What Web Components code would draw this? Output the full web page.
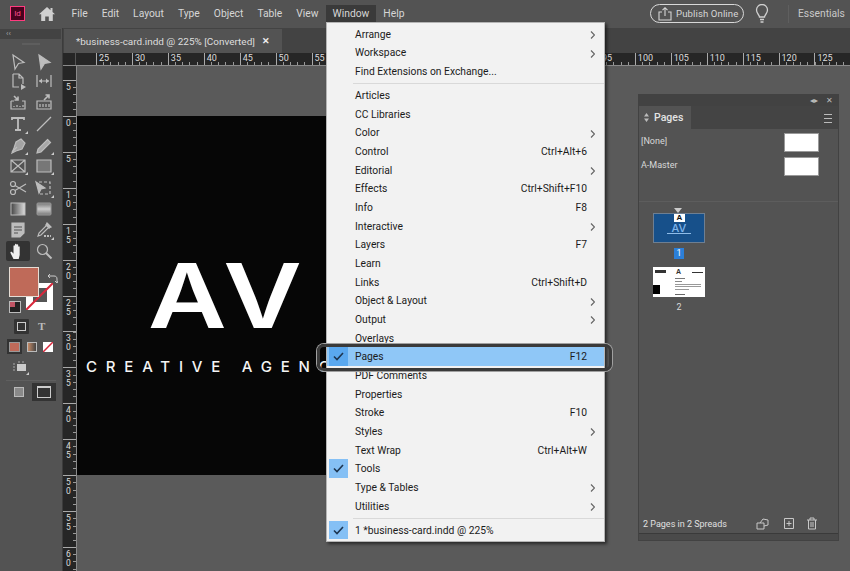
<!DOCTYPE html>
<html>
<head>
<meta charset="utf-8">
<title>InDesign</title>
<style>
  html, body { margin: 0; height: 100%; overflow: hidden; background: #535353; }
  body { font-family: Roboto, "Liberation Sans", sans-serif; }
</style>
</head>
<body>
<app-shell>
  <app-menubar slot="menubar"></app-menubar>
  <app-toolbox slot="tools"></app-toolbox>
  <doc-workspace slot="workspace"></doc-workspace>
  <window-menu slot="overlay"></window-menu>
  <pages-panel slot="overlay"></pages-panel>
</app-shell>

<script>
const stroke = (inner, size = 18) => `<svg width="${size}" height="${size}" viewBox="0 0 18 18" fill="none" stroke="currentColor" stroke-width="1.2">${inner}</svg>`;

const ICONS = {
    select: stroke('<path d="M4 2l11 7.5-5.5 1L6 16z"/>'),
    direct: stroke('<path d="M4 2l11 7.5-5.5 1L6 16z" fill="currentColor"/>'),
    page: stroke('<path d="M4 2h6l4 4v6M4 2v13h6M10 2v4h4"/><path d="M12 12l5 3-5 3z" fill="currentColor" stroke="none"/>'),
    gap: stroke('<path d="M2 3v12M16 3v12M4 9h10"/><path d="M4 9l3-2.5v5zM14 9l-3-2.5v5z" fill="currentColor" stroke="none"/>'),
    collect: stroke('<path d="M2 8v8h14V8h-3M2 8h3"/><path d="M5 3l4 4M9 3.5V7H5.500" stroke-width="1.6"/><path d="M5 13v1M8 12v2M11 13v1M14 12v2"/>'),
    place: stroke('<path d="M2 8v8h14V8H2z"/><path d="M9 7l5-5M10.500 2H14v3.500" stroke-width="1.6"/><path d="M5 11v3M8 11v3M11 11v3M14 11v3"/>'),
    type: stroke('<path d="M3 5V3h12v2M9 3v12M6 15h6" stroke-width="1.800"/>'),
    line: stroke('<path d="M2 16L16 2"/>'),
    pen: stroke('<path d="M12 2l4 4-3 6-6 2-4 2 2-5 2-6z" fill="currentColor" fill-opacity=".75"/><path d="M3 15l5-5"/>'),
    pencil: stroke('<path d="M12.500 2.500l3 3L6 15l-4 1 1-4z" fill="currentColor" fill-opacity=".8"/>'),
    frame: stroke('<path d="M2 3h14v12H2zM2 3l14 12M16 3L2 15"/>'),
    rect: stroke('<path d="M2 3h14v12H2z" fill="#777"/>'),
    scissors: stroke('<circle cx="4" cy="5" r="2.500"/><circle cx="4" cy="13" r="2.500"/><path d="M6 6.500L17 13M6 11.500L17 5"/>', 18),
    transform: stroke('<path d="M4 3h11v12H4" stroke-dasharray="3 2"/><path d="M1 3l9 6-4 1-2 4z" fill="currentColor"/>'),
    gradient: `<svg width="18" height="18" viewBox="0 0 18 18"><defs><linearGradient id="g1"><stop offset="0" stop-color="#444"/><stop offset="1" stop-color="#ddd"/></linearGradient></defs><rect x="2" y="3" width="14" height="12" fill="url(#g1)" stroke="#bbb"/></svg>`,
    feather: `<svg width="18" height="18" viewBox="0 0 18 18"><defs><linearGradient id="g2" x2="0" y2="1"><stop offset="0" stop-color="#777"/><stop offset=".5" stop-color="#ccc"/><stop offset="1" stop-color="#777"/></linearGradient></defs><rect x="2" y="3" width="14" height="12" rx="1" fill="url(#g2)" stroke="#999"/></svg>`,
    note: stroke('<path d="M3 2h12v10l-4 4H3z" fill="currentColor"/><path d="M5 6h8M5 9h8M5 12h4" stroke="#535353"/>'),
    dropper: stroke('<path d="M12 2l4 4-3 1-7 7-3 1 1-3 7-7z"/><path d="M11 3l4 4" stroke-width="2.500"/><path d="M9 15h7" stroke-width="2" stroke-dasharray="2 1"/>'),
    hand: `<svg width="18" height="18" viewBox="0 0 18 18"><path d="M4.500 17l-3-6c-.5-1 .8-1.800 1.500-1l1.500 1.800V4c0-1 1.500-1 1.500 0v4V2.500c0-1 1.600-1 1.600 0V8V3c0-1 1.600-1 1.600 0v5.500V5c0-1 1.500-1 1.500 0v8l-1 4z" fill="#eee"/></svg>`,
    zoom: stroke('<circle cx="7.500" cy="7.500" r="5"/><path d="M11 11l5.500 5.500" stroke-width="2"/>'),
    upload: `<svg width="16" height="16" viewBox="0 0 16 16" fill="none" stroke="currentColor" stroke-width="1.100"><path d="M5 6H2v8h12V6h-3M8 10V2M5.500 4.200L8 1.700l2.500 2.500"/></svg>`,
    bulb: `<svg width="16" height="20" viewBox="0 0 16 20" fill="none" stroke="currentColor" stroke-width="1.300"><path d="M5.500 13c0-2-3-3.500-3-7a5.500 5.500 0 0 1 11 0c0 3.500-3 5-3 7z"/><path d="M6 15.500h4M6.500 18h3" stroke-width="1.600"/></svg>`,
    home: `<svg width="16" height="14" viewBox="0 0 16 14"><path d="M8 0L0 7.200h2.200V14h4V9.500h3.600V14h4V7.200H16L13.500 5V1h-2v2.200z" fill="#cfcfcf"/></svg>`
};

class AppShell extends HTMLElement {
    constructor() {
        super();
        this.attachShadow({ mode: 'open' });
        this.shadowRoot.innerHTML = `
        <style>
          :host { display: grid; position: relative; width: 850px; height: 571px; overflow: hidden;
            grid-template-columns: 63px 1fr; grid-template-rows: 28px 1fr; background: #535353; }
          ::slotted([slot=menubar]) { grid-column: 1 / 3; }
        </style>
        <slot name="menubar"></slot>
        <slot name="tools"></slot>
        <slot name="workspace"></slot>
        <slot name="overlay"></slot>`;
    }
}

class AppMenubar extends HTMLElement {
    constructor() {
        super();
        this.attachShadow({ mode: 'open' });
        const items = ['File', 'Edit', 'Layout', 'Type', 'Object', 'Table', 'View', 'Window', 'Help'];
        this.shadowRoot.innerHTML = `
        <style>
          :host { display: flex; align-items: center; height: 28px; background: #535353; color: #d6d6d6;
            font: 10.3px Roboto, sans-serif; padding-bottom: 1px; box-sizing: border-box; white-space: nowrap; }
          .logo { width: 13px; height: 13px; margin-left: 10px; border: 1px solid #ff3b7f; background: #49021f;
            color: #ff4f8f; font: 8px/13px Roboto, sans-serif; text-align: center; }
          .home { margin: 0 9.500px 0 14px; display: flex; }
          .item { padding: 1px 7px; height: 15px; line-height: 15px; }
          .item.on { background: #3a3a3a; }
          .spacer { flex: 1; }
          .publish { display: flex; align-items: center; gap: 3px; width: 94px; height: 19px; box-sizing: border-box;
            border: 1px solid #d8d8d8; border-radius: 10px; padding-left: 6px; font-size: 9.6px; letter-spacing: .1px; }
          .bulb { margin: 0 18px 0 10px; display: flex; color: #d0d0d0; }
          .div { width: 1px; height: 18px; background: #5f5f5f; margin-right: 9px; }
          .wk { width: 52px; color: #c8c8c8; }
        </style>
        <span class="logo">Id</span>
        <span class="home">${ICONS.home}</span>
        ${items.map(t => `<span class="item ${t == 'Window' ? 'on' : ''}">${t}</span>`).join('')}
        <span class="spacer"></span>
        <span class="publish">${ICONS.upload}<span>Publish Online</span></span>
        <span class="bulb">${ICONS.bulb}</span>
        <span class="div"></span>
        <span class="wk">Essentials</span>`;
    }
}

class ToolBtn extends HTMLElement {
    constructor() {
        super();
        this.attachShadow({ mode: 'open' });
    }
    connectedCallback() {
        this.shadowRoot.innerHTML = `
        <style>
          :host { display: flex; align-items: center; justify-content: center; position: relative; color: #bdbdbd; }
          :host([active]) { background: #333; border-radius: 2px; }
          :host([more])::after { content: ''; position: absolute; right: 2px; bottom: 1px;
            border-left: 3px solid transparent; border-bottom: 3px solid #ccc; }
        </style>
        ${ICONS[this.getAttribute('icon')] || ''}`;
    }
}

class AppToolbox extends HTMLElement {
    constructor() {
        super();
        this.attachShadow({ mode: 'open' });
        const tools = [
            ['select'], ['direct'], ['page'], ['gap'], ['collect'], ['place'],
            ['type', 1], ['line'], ['pen', 1], ['pencil', 1], ['frame', 1], ['rect', 1],
            ['scissors'], ['transform', 1], ['gradient'], ['feather'], ['note'], ['dropper', 1], ['hand', 0, 1], ['zoom']
        ];
        this.shadowRoot.innerHTML = `
        <style>
          :host { display: block; box-sizing: border-box; background: #535353; border-right: 1px solid #3c3c3c; height: 100%; }
          .strip { height: 10px; background: #434343; margin: 1px 1px 0 0; color: #aaa; font: 8px/9px Roboto, sans-serif; padding-left: 6px; }
          .grip { height: 2px; margin: 4px 22px 0; background: #5e5e5e; }
          .grid { display: grid; grid-template-columns: 24px 24px; column-gap: 2px; padding: 7px 0 0 6px;
            grid-template-rows: 19px 20px 22px 22px 21px 20px 23px 20px 22px 20px; }
          .color { position: relative; height: 56px; margin-top: 6px; }
          .fill { position: absolute; left: 9px; top: 0; width: 28px; height: 28px; background: #bf6a59; border: 1px solid #e5ddd5; z-index: 1; }
          .stroke { position: absolute; left: 26px; top: 16px; width: 27px; height: 27px; background: #fff; overflow: hidden; }
          .stroke i { position: absolute; left: 7px; top: 5px; width: 14px; height: 14px; background: #555; }
          .stroke svg, .none svg { position: absolute; left: 0; top: 0; }
          .swap { position: absolute; left: 47px; top: 6px; color: #ccc; }
          .defaults { position: absolute; left: 9px; top: 34px; width: 10px; height: 10px; background: #222; border: 1px solid #bbb; }
          .defaults::after { content: ''; position: absolute; left: 0; top: 0; width: 5px; height: 5px; background: #c05565; }
          .mode { display: flex; align-items: center; height: 16px; padding-left: 14px; margin-top: -5px; }
          .mode b { display: flex; width: 15px; height: 15px; background: #333; align-items: center; justify-content: center; border-radius: 1px; }
          .mode b i { width: 7px; height: 7px; border: 1px solid #ccc; }
          .mode span { margin-left: 9px; color: #bbb; font: bold 11px "Liberation Serif", serif; }
          .swatches { display: flex; align-items: center; height: 15px; margin-top: 5px; padding-left: 7px; }
          .swatches .cur { width: 15px; height: 15px; background: #333; display: flex; align-items: center; justify-content: center; margin-right: 5px; }
          .swatches .cur i { width: 11px; height: 10px; background: #bf6a59; border: 1px solid #999; box-sizing: border-box; }
          .grad { width: 10px; height: 10px; background: linear-gradient(90deg, #c48a66, #444); border: 1px solid #bbb; box-sizing: border-box; margin-right: 6px; }
          .none { position: relative; width: 10px; height: 10px; background: #fff; }
          .preview { height: 14px; margin: 7px 0 0 13px; display: flex; position: relative; }
          .rule { height: 1px; background: #5f5f5f; margin: 5px 6px 0; }
          .views { display: flex; align-items: center; padding-left: 14px; height: 19px; margin-top: 1px; }
          .views .a { width: 10px; height: 10px; background: #8a8a8a; border: 1px solid #bbb; box-sizing: border-box; }
          .views .b { width: 24px; height: 18px; background: #333; display: flex; align-items: center; justify-content: center; margin-left: 8px; position: relative; }
          .views .b i { width: 12px; height: 9px; border: 1px solid #ccc; border-top-width: 2px; }
        </style>
        <div class="strip">&#x2039;&#x2039;</div>
        <div class="grip"></div>
        <div class="grid">
          ${tools.map(t => `<tool-btn icon="${t[0]}" ${t[1] ? 'more' : ''} ${t[2] ? 'active' : ''}></tool-btn>`).join('')}
        </div>
        <div class="color">
          <div class="stroke"><i></i><svg width="27" height="27"><path d="M0 27L27 0" stroke="#d8283c" stroke-width="2"/></svg></div>
          <div class="fill"></div>
          <svg class="swap" width="11" height="11" viewBox="0 0 11 11" fill="none" stroke="currentColor"><path d="M1 3h6c2 0 3 1 3 3v4M8 8l2 2 1-2M3 1L1 3l2 2"/></svg>
          <div class="defaults"></div>
        </div>
        <div class="mode"><b><i></i></b><span>T</span></div>
        <div class="swatches">
          <div class="cur"><i></i></div>
          <div class="grad"></div>
          <div class="none"><svg width="10" height="10"><path d="M0 10L10 0" stroke="#d8283c" stroke-width="1.500"/></svg></div>
        </div>
        <div class="preview"><svg width="16" height="14" viewBox="0 0 16 14"><rect x="4" y="3" width="9" height="7" fill="#ccc"/><path d="M0 3h2M0 6h2M0 9h2M5 1h2M9 1h2" stroke="#aaa"/><path d="M16 14h-3l3-3z" fill="#ccc"/></svg></div>
        <div class="rule"></div>
        <div class="views"><div class="a"></div><div class="b"><i></i></div></div>`;
    }
}

class DocTabbar extends HTMLElement {
    constructor() {
        super();
        this.attachShadow({ mode: 'open' });
        this.shadowRoot.innerHTML = `
        <style>
          :host { display: flex; height: 25px; background: #434343; align-items: flex-end; padding-left: 1px; box-sizing: border-box; }
          .tab { display: flex; align-items: center; width: 218px; height: 24px; box-sizing: border-box; background: #535353;
            padding-left: 12px; color: #dedede; font: 9.950px Roboto, sans-serif; white-space: nowrap; }
          .x { margin-left: 7px; font-weight: bold; color: #eee; font-size: 9px; }
        </style>
        <div class="tab"><span>*business-card.indd @ 225% [Converted]</span><span class="x">&#x2715;</span></div>`;
    }
}

class RulerH extends HTMLElement {
    constructor() {
        super();
        this.attachShadow({ mode: 'open' });
        let cells = '';
        // the labels from 60 to 90 sit under the open menu
        for (let n = 25; n <= 125; n += 5) cells += `<span class="c">${n >= 60 && n <= 90 ? '' : n}</span>`;
        this.shadowRoot.innerHTML = `
        <style>
          :host { display: flex; height: 13px; background: #262626; overflow: hidden; color: #ddd;
            font: 9px/11px Roboto, sans-serif; border-bottom: 1px solid #8a8a8a; box-sizing: border-box; }
          .corner { flex: 0 0 13px; box-sizing: border-box; border-right: 1px solid #555; }
          .track { flex: 1; display: flex; padding-left: 20px;
            background:
              repeating-linear-gradient(90deg, #999 0 1px, transparent 1px 7.186px) 20px 100% / 100% 3px no-repeat; }
          .c { flex: 0 0 35.93px; box-sizing: border-box; border-left: 1px solid #aaa; padding-left: 2px; }
        </style>
        <div class="corner"></div>
        <div class="track">${cells}</div>`;
    }
}

class RulerV extends HTMLElement {
    constructor() {
        super();
        this.attachShadow({ mode: 'open' });
        let cells = '';
        for (const n of [5, 0, 5, 10, 15, 20, 25, 30, 35, 40, 45, 50, 55, 60]) {
            cells += `<div class="c">${String(n).split('').map(d => `<span>${d}</span>`).join('')}</div>`;
        }
        this.shadowRoot.innerHTML = `
        <style>
          :host { display: block; width: 14px; background: #262626; overflow: hidden; color: #ddd; box-sizing: border-box;
            font: 8.500px/9px Roboto, sans-serif; border-right: 1px solid #8a8a8a; padding-top: 14px;
            background-image: repeating-linear-gradient(180deg, #999 0 1px, transparent 1px 7.186px);
            background-size: 3px 100%; background-position: 100% 14px; background-repeat: no-repeat; }
          .c { height: 35.93px; box-sizing: border-box; border-top: 1px solid #aaa; padding: 2px 0 0 3px; }
          .c span { display: block; height: 9px; }
        </style>
        ${cells}`;
    }
}

class DocPage extends HTMLElement {
    constructor() {
        super();
        this.attachShadow({ mode: 'open' });
        this.shadowRoot.innerHTML = `
        <style>
          :host { display: block; width: 251px; height: 359px; background: #060606; color: #fff; box-sizing: border-box; padding: 130px 0 0 9px; overflow: hidden; }
          .logo { font: 600 90px/100px Inter, "Liberation Sans", sans-serif; letter-spacing: 4px; margin-left: 62px; transform: scaleX(1.2); transform-origin: 0 0; white-space: nowrap; }
          .sub { font: 500 15px/20px Inter, "Liberation Sans", sans-serif; letter-spacing: 8.8px; margin-top: 11px; white-space: nowrap; color: #f4f4f4; }
        </style>
        <div class="logo">AV</div>
        <div class="sub">CREATIVE AGENCY</div>`;
    }
}

class DocWorkspace extends HTMLElement {
    constructor() {
        super();
        this.attachShadow({ mode: 'open' });
        this.shadowRoot.innerHTML = `
        <style>
          :host { display: flex; flex-direction: column; height: 100%; background: #595959; min-width: 0; }
          .row { display: flex; flex: 1; min-height: 0; }
          .canvas { flex: 1; padding-top: 50px; background: #5a5a5a; }
        </style>
        <doc-tabbar></doc-tabbar>
        <ruler-h></ruler-h>
        <div class="row">
          <ruler-v></ruler-v>
          <div class="canvas"><doc-page></doc-page></div>
        </div>`;
    }
}

class MenuItem extends HTMLElement {
    constructor() {
        super();
        this.attachShadow({ mode: 'open' });
    }
    connectedCallback() {
        const key = this.getAttribute('key') || '';
        const sub = this.hasAttribute('sub');
        const checked = this.hasAttribute('checked');
        this.shadowRoot.innerHTML = `
        <style>
          :host { display: flex; align-items: center; position: relative; height: 18.67px; box-sizing: border-box;
            padding-left: 28px; color: #1b1b1b; font: 10.3px Roboto, sans-serif; white-space: nowrap; }
          :host([selected]) { background: #8fc7f7; }
          .box { position: absolute; left: 2px; top: 0; width: 19px; height: 100%; display: flex; align-items: center;
            justify-content: center; background: #85c0f5; }
          :host([selected]) .box { background: #5aa8ef; }
          .label { flex: 1; }
          .key { margin-right: 17px; }
          .arrow { position: absolute; right: 9px; top: 6px; }
        </style>
        ${checked ? `<span class="box"><svg width="11" height="9" viewBox="0 0 11 9" fill="none" stroke="#1e3550" stroke-width="1.600"><path d="M1 4.500L4 7.500 10 1"/></svg></span>` : ''}
        <span class="label"><slot></slot></span>
        ${key ? `<span class="key">${key}</span>` : ''}
        ${sub ? `<svg class="arrow" width="5" height="8" viewBox="0 0 5 8" fill="none" stroke="#666" stroke-width="1.200"><path d="M1 .5L4.500 4 1 7.500"/></svg>` : ''}`;
    }
}

class WindowMenu extends HTMLElement {
    constructor() {
        super();
        this.attachShadow({ mode: 'open' });
        this.shadowRoot.innerHTML = `
        <style>
          :host { display: block; position: absolute; left: 326px; top: 22px; width: 279px; height: 520px; box-sizing: border-box;
            background: #f2f2f2; border: 1px solid #b5b5b5; padding-top: 2px; box-shadow: 2px 2px 3px rgba(0,0,0,.55); }
          .sep { height: 5.330px; display: flex; align-items: center; padding-left: 26px; }
          .sep::after { content: ''; flex: 1; height: 1px; background: #d9d9d9; }
          .ring { position: absolute; left: -10px; top: 321px; width: 295px; height: 27px; box-sizing: border-box;
            border: 3px solid #3a3a3a; border-radius: 7px; box-shadow: 0 0 0 1px #a0a0a0; }
        </style>
        <menu-item sub>Arrange</menu-item>
        <menu-item sub>Workspace</menu-item>
        <menu-item>Find Extensions on Exchange...</menu-item>
        <div class="sep"></div>
        <menu-item>Articles</menu-item>
        <menu-item>CC Libraries</menu-item>
        <menu-item sub>Color</menu-item>
        <menu-item key="Ctrl+Alt+6">Control</menu-item>
        <menu-item sub>Editorial</menu-item>
        <menu-item key="Ctrl+Shift+F10">Effects</menu-item>
        <menu-item key="F8">Info</menu-item>
        <menu-item sub>Interactive</menu-item>
        <menu-item key="F7">Layers</menu-item>
        <menu-item>Learn</menu-item>
        <menu-item key="Ctrl+Shift+D">Links</menu-item>
        <menu-item sub>Object &amp; Layout</menu-item>
        <menu-item sub>Output</menu-item>
        <menu-item>Overlays</menu-item>
        <menu-item checked selected key="F12">Pages</menu-item>
        <menu-item>PDF Comments</menu-item>
        <menu-item>Properties</menu-item>
        <menu-item key="F10">Stroke</menu-item>
        <menu-item sub>Styles</menu-item>
        <menu-item key="Ctrl+Alt+W">Text Wrap</menu-item>
        <menu-item checked>Tools</menu-item>
        <menu-item sub>Type &amp; Tables</menu-item>
        <menu-item sub>Utilities</menu-item>
        <div class="sep"></div>
        <menu-item checked>1 *business-card.indd @ 225%</menu-item>
        <div class="ring"></div>`;
    }
}

class PagesPanel extends HTMLElement {
    constructor() {
        super();
        this.attachShadow({ mode: 'open' });
        this.shadowRoot.innerHTML = `
        <style>
          :host { display: flex; flex-direction: column; position: absolute; left: 638px; top: 94px; width: 201px; height: 447px; box-sizing: border-box;
            background: #535353; border: 1px solid #424242; color: #d8d8d8; font: 9px Roboto, sans-serif; }
          .top { height: 11px; background: #424242; display: flex; justify-content: flex-end; align-items: center; gap: 8px; padding-right: 5px; color: #bbb; font-size: 8px; }
          .tabs { display: flex; height: 23px; background: #444; align-items: stretch; justify-content: space-between; }
          .tab { width: 52px; background: #535353; display: flex; align-items: center; gap: 5px; padding-left: 5px; box-sizing: border-box; font-size: 10.5px; font-weight: 500; color: #e4e4e4; }
          .tab svg { color: #bbb; }
          .burger { width: 8px; margin: 8px 6px 0 0; height: 7px; border-top: 1px solid #bbb; border-bottom: 1px solid #bbb; position: relative; }
          .burger::after { content: ''; position: absolute; left: 0; right: 0; top: 3px; height: 1px; background: #bbb; }
          .master { display: flex; align-items: center; justify-content: space-between; height: 24px; padding: 0 19px 0 2px; }
          .master span { margin-bottom: 3px; }
          .masters { border-bottom: 1px solid #5d5d5d; height: 72px; box-sizing: border-box; margin-top: 1px; }
          .master i { width: 35px; height: 19px; background: #fff; border: 1px solid #999; box-sizing: border-box; }
          .spreads { flex: 1; padding: 6px 0 0 14px; position: relative; }
          .tri { width: 0; margin-left: 21px; border: 4.500px solid transparent; border-top: 5px solid #ccc; border-bottom: 0; }
          .thumb { width: 52px; height: 30px; box-sizing: border-box; position: relative; }
          .p1 { background: #17508a; border: 1px solid #6e7f92; color: #7fb4ea; text-align: center; font: 500 11px/12px Inter, sans-serif; padding-top: 8px; }
          .p1 .a { position: absolute; left: 20px; top: 0; width: 11px; height: 8px; background: #fff; color: #111; font: bold 8px/8px "Liberation Sans", sans-serif; }
          .p1 .u { position: absolute; left: 13px; right: 13px; top: 19px; height: 1px; background: #8fbce8; }
          .num { width: 52px; text-align: center; margin: 5px 0 8px; height: 11px; line-height: 11px; }
          .num b { display: inline-block; width: 10px; background: #2b7fd8; color: #fff; font-weight: normal; }
          .p2 { background: #fff; overflow: hidden; color: #222; }
          .p2 span { position: absolute; background: #333; }
          .p2 .a { position: absolute; left: 23px; top: 1px; font: bold 7px/8px "Liberation Sans", sans-serif; color: #333; }
          .foot { height: 18px; display: flex; align-items: center; padding-left: 4px; color: #e0e0e0; position: relative; }
          .foot .ic { position: absolute; color: #c8c8c8; }
          .grip { height: 6px; background: #4a4a4a; border-top: 1px solid #3a3a3a; }
        </style>
        <div class="top"><span>&#x25C2;&#x25B8;</span><span>&#x2715;</span></div>
        <div class="tabs"><div class="tab"><svg width="5" height="9" viewBox="0 0 5 9" fill="currentColor"><path d="M2.500 0L5 3.500H0zM2.500 9L0 5.500h5z"/></svg>Pages</div><div class="burger"></div></div>
        <div class="masters">
          <div class="master"><span>[None]</span><i></i></div>
          <div class="master"><span>A-Master</span><i></i></div>
        </div>
        <div class="spreads">
          <div class="tri"></div>
          <div class="thumb p1">AV<span class="a">A</span><span class="u"></span></div>
          <div class="num"><b>1</b></div>
          <div class="thumb p2">
            <span style="left:2px;top:3px;width:11px;height:3px"></span>
            <span class="a" style="background:none">A</span>
            <span style="left:39px;top:5px;width:11px;height:1px"></span>
            <span style="left:22px;top:11px;width:10px;height:1px;background:#777"></span>
            <span style="left:22px;top:14px;width:7px;height:1px;background:#888"></span>
            <span style="left:22px;top:17px;width:26px;height:1px;background:#999"></span>
            <span style="left:22px;top:19px;width:26px;height:1px;background:#999"></span>
            <span style="left:22px;top:22px;width:14px;height:1px;background:#999"></span>
            <span style="left:22px;top:27px;width:10px;height:1px;background:#666"></span>
            <span style="left:0;top:18px;width:7px;height:9px;background:#000"></span>
          </div>
          <div class="num">2</div>
        </div>
        <div class="foot">2 Pages in 2 Spreads
          <svg class="ic" style="left:117px;top:2px" width="14" height="13" viewBox="0 0 14 13" fill="none" stroke="currentColor"><path d="M1 6h7v6H1zM4 6l3-4 5 1v5l-4 1"/></svg>
          <svg class="ic" style="left:144px;top:2px" width="12" height="13" viewBox="0 0 12 13" fill="none" stroke="currentColor"><path d="M1.500 1.500h9v10h-9zM6 4v5M3.500 6.500h5"/></svg>
          <svg class="ic" style="left:167px;top:2px" width="12" height="13" viewBox="0 0 12 13" fill="none" stroke="currentColor"><path d="M1 3h10M4 3V1h4v2M2.500 3v9h7V3M5 5v5M7 5v5"/></svg>
        </div>
        <div class="grip"></div>`;
    }
}

customElements.define('app-shell', AppShell);
customElements.define('app-menubar', AppMenubar);
customElements.define('tool-btn', ToolBtn);
customElements.define('app-toolbox', AppToolbox);
customElements.define('doc-tabbar', DocTabbar);
customElements.define('ruler-h', RulerH);
customElements.define('ruler-v', RulerV);
customElements.define('doc-page', DocPage);
customElements.define('doc-workspace', DocWorkspace);
customElements.define('menu-item', MenuItem);
customElements.define('window-menu', WindowMenu);
customElements.define('pages-panel', PagesPanel);
</script>
</body>
</html>
